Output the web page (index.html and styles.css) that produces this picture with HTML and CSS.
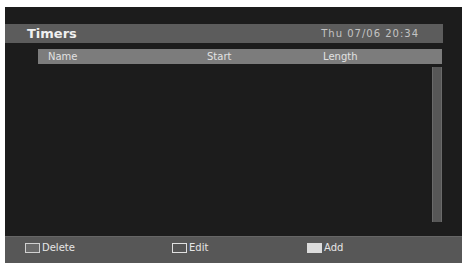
FILE: index.html
```html
<!DOCTYPE html>
<html lang="en">
<head>
    <meta charset="UTF-8">
    <title>Timers</title>
    <link rel="stylesheet" href="styles.css">
</head>
<body>
    <div class="screen">
        <div class="title-bar">
            <span class="title">Timers</span>
            <span class="clock">Thu 07/06 20:34</span>
        </div>
        <div class="list">
            <div class="list-head">
                <span class="col-name">Name</span>
                <span class="col-start">Start</span>
                <span class="col-length">Length</span>
            </div>
            <div class="list-body">
                <div class="rows"></div>
                <div class="scrollbar"></div>
            </div>
        </div>
        <div class="footer">
            <div class="key key-delete"><span class="key-box"></span>Delete</div>
            <div class="key key-edit"><span class="key-box"></span>Edit</div>
            <div class="key key-add"><span class="key-box filled"></span>Add</div>
        </div>
    </div>
</body>
</html>
```

FILE: styles.css
```css
body {
    margin: 0;
    padding: 7px 3px 2px 5px;
    background-color: #fff;
    font-family: "DejaVu Sans", "Liberation Sans", sans-serif;
}
.screen {
    height: 256px;
    background-color: #1c1c1c;
    display: flex;
    flex-direction: column;
}
.title-bar {
    margin-top: 17px;
    margin-right: 19px;
    height: 19px;
    background-color: #5c5c5c;
    display: flex;
    align-items: center;
    justify-content: space-between;
    padding: 0 24px 0 22px;
}
.title {
    color: #f0f0f0;
    font-size: 13px;
    font-weight: bold;
}
.clock {
    color: #c4c4c4;
    font-size: 10px;
    letter-spacing: 1px;
}
.list {
    margin: 6px 20px 0 33px;
    flex: 1;
    display: flex;
    flex-direction: column;
}
.list-head {
    height: 15px;
    background-color: #7c7c7c;
    display: flex;
    align-items: center;
    color: #e2e2e2;
    font-size: 10px;
}
.col-name {
    margin-left: 10px;
    width: 159px;
}
.col-start {
    width: 116px;
}
.list-body {
    flex: 1;
    display: flex;
    padding: 3px 0 14px;
}
.rows {
    flex: 1;
}
.scrollbar {
    width: 8px;
    background-color: #575757;
    border-left: 1px solid #6a6a6a;
    border-right: 1px solid #6a6a6a;
}
.footer {
    height: 21px;
    padding-bottom: 5px;
    background-color: #575757;
    border-top: 1px solid #666;
    display: flex;
    align-items: center;
    color: #e6e6e6;
    font-size: 10px;
}
.key {
    display: flex;
    align-items: center;
}
.key-delete {
    margin-left: 20px;
    width: 147px;
}
.key-edit {
    width: 135px;
}
.key-box {
    width: 13px;
    height: 8px;
    border: 1px solid #d0d0d0;
    background-color: #6a6a6a;
    margin-right: 2px;
}
.key-edit .key-box {
    background-color: #555;
    border-color: #e0e0e0;
}
.key-box.filled {
    background-color: #dcdcdc;
    border-color: #dcdcdc;
}
```
